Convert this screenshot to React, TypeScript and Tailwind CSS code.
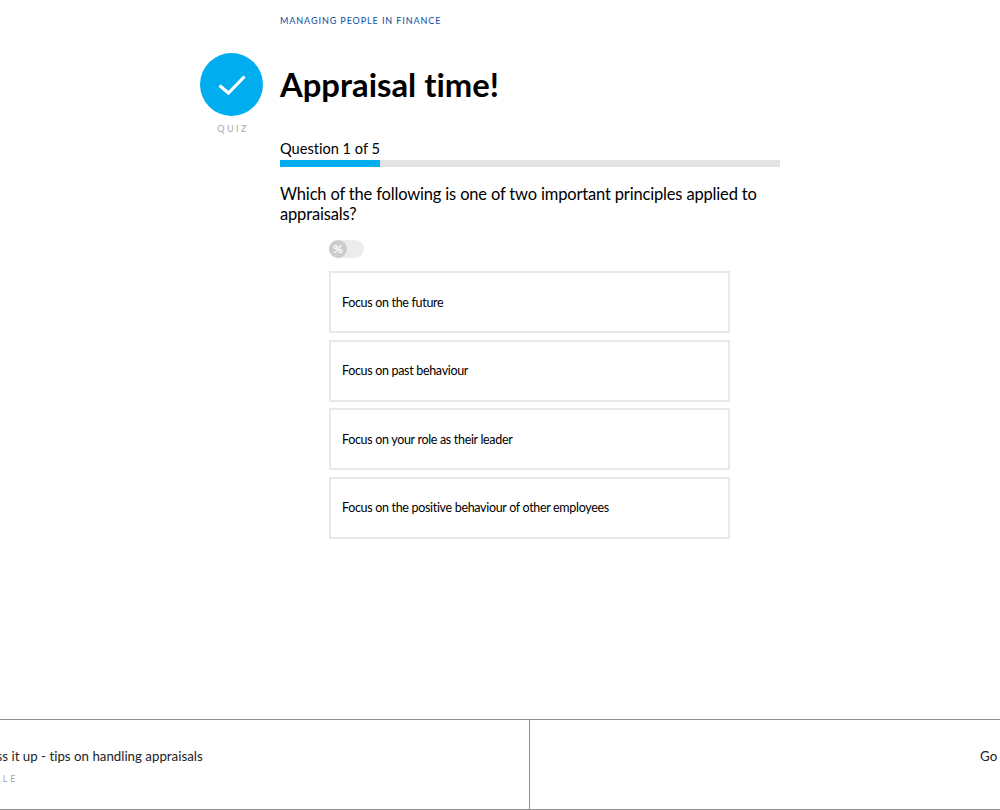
const FONT = "font-['Lato','Noto_Sans',sans-serif]";

const ANTWOORDEN = [
  "Focus on the future",
  "Focus on past behaviour",
  "Focus on your role as their leader",
  "Focus on the positive behaviour of other employees",
];

function QuizBadge() {
  return (
    <div className="flex w-[63px] shrink-0 flex-col items-center">
      <div className="flex h-[63px] w-[63px] items-center justify-center rounded-full bg-[#00aeef]">
        <svg width="30" height="24" viewBox="0 0 30 24" fill="none">
          <path d="M2.5 12.5 L11.5 20 L27.5 3.5" stroke="#fff" strokeWidth="3.2" />
        </svg>
      </div>
      <span className="mt-[7px] pl-[3px] text-[9px] leading-[11px] tracking-[0.27em] text-[#a8a8a8]">QUIZ</span>
    </div>
  );
}

export default function App() {
  return (
    <div className={`flex h-[810px] w-[1000px] flex-col overflow-hidden bg-white text-black [font-variant-ligatures:none] ${FONT}`}>
      <main className="ml-[280px] w-[500px] flex-1">
        <p className="pt-[15px] text-[9px] leading-[12px] font-medium tracking-[0.1em] text-[#1f5aa8]">
          MANAGING PEOPLE IN FINANCE
        </p>

        <div className="-ml-[80px] mt-[26px] flex items-start gap-[17px]">
          <QuizBadge />
          <h1 className="pt-[10px] text-[32.8px] leading-[44px] font-bold">Appraisal time!</h1>
        </div>

        <p className="mt-[5px] text-[14.6px] leading-[20px]">Question 1 of 5</p>
        <div className="mt-[1px] h-[7px] w-full bg-[#e3e3e3]">
          <div className="h-full w-1/5 bg-[#00aeef]" />
        </div>

        <p className="mt-[17px] text-[16.5px] leading-[20px] tracking-[-0.17px]">
          Which of the following is one of two important principles applied to appraisals?
        </p>

        <div className="ml-[49px] mt-[16px] w-[401px]">
          <div className="flex h-[18px] w-[35px] rounded-full bg-[#ececec]">
            <span className="flex h-[18px] w-[18px] items-center justify-center rounded-full bg-[#cccccc] text-[12px] font-bold text-white">
              %
            </span>
          </div>

          <ul className="mt-[13px] flex flex-col gap-[6.5px]">
            {ANTWOORDEN.map((a) => (
              <li
                key={a}
                className="flex h-[62px] items-center border-2 border-[#e8e8e8] px-[11px] pt-[2px] text-[12.5px] tracking-[-0.32px]"
              >
                {a}
              </li>
            ))}
          </ul>
        </div>
      </main>

      <footer className="flex h-[91px] shrink-0 border-y border-[#8f8f8f]">
        <div className="w-[530px] shrink-0 overflow-hidden border-r border-[#8f8f8f]">
          <div className="-ml-[25px] pt-[27px] whitespace-nowrap">
            <p className="text-[13.3px] leading-[18px] text-[#222]">Dress it up - tips on handling appraisals</p>
            <p className="-ml-[11px] mt-[8px] text-[9px] leading-[11px] tracking-[0.3em] text-[#a8a8a8]">ARTICLE</p>
          </div>
        </div>
        <div className="flex-1 overflow-hidden">
          <p className="pt-[27px] pl-[450px] text-[13.3px] leading-[18px] whitespace-nowrap text-[#222]">Go to next</p>
        </div>
      </footer>
    </div>
  );
}
